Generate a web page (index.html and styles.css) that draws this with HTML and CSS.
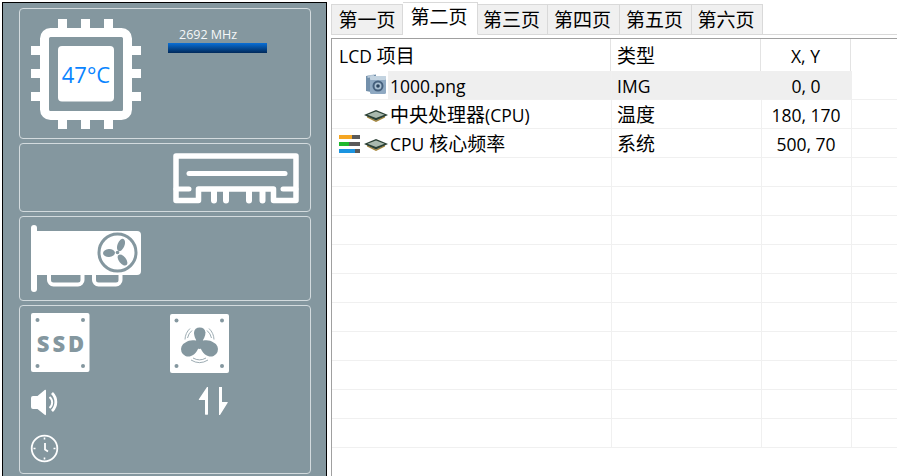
FILE: index.html
```html
<!DOCTYPE html>
<html lang="zh-CN">
<head>
<meta charset="utf-8">
<title>LCD</title>
<link rel="stylesheet" href="styles.css">
</head>
<body>
<div class="app">
  <aside class="panel">
    <section class="card card-cpu">
      <div class="cpu">
        <svg class="cpu-svg" width="110" height="110" viewBox="31 19 110 110">
          <rect x="44.500" y="32.500" width="83" height="83" rx="6" fill="none" stroke="#fff" stroke-width="9"/>
          <rect x="58" y="46" width="56" height="55.500" rx="4" fill="#fff"/>
          <path d="M58 19h9v10h-9zM81 19h9v10h-9zM104 19h9v10h-9zM58 119h9v10h-9zM81 119h9v10h-9zM104 119h9v10h-9zM31 46h10v9H31zM31 69h10v9H31zM31 92h10v9H31zM131 46h10v9h-10zM131 69h10v9h-10zM131 92h10v9h-10z" fill="#fff"/>
        </svg>
        <span class="temp">47°C</span>
      </div>
      <div class="freq">
        <div class="freq-label">2692 MHz</div>
        <div class="freq-bar"></div>
      </div>
    </section>
    <section class="card card-ram">
      <svg width="126" height="51" viewBox="173 153 126 51" fill="none" stroke="#fff">
        <path d="M176 200.500H198.500V189H273.500V200.500H296V156H176Z" stroke-width="5.500" stroke-linejoin="round"/>
        <path d="M189 173.500H285" stroke-width="5" stroke-linecap="round"/>
        <path d="M176 189H189M283 189H296" stroke-width="5" stroke-linecap="round"/>
        <path d="M214 190V200.500M226 190V200.500M249 190V200.500M262.500 190V200.500" stroke-width="6" stroke-linecap="round"/>
      </svg>
    </section>
    <section class="card card-gpu">
      <svg width="110" height="68" viewBox="31 225 110 68">
        <rect x="31" y="225" width="6" height="67" rx="3" fill="#fff"/>
        <path d="M36 231H137a4 4 0 0 1 4 4V271a4 4 0 0 1-4 4H36Z" fill="#fff"/>
        <path d="M49 274V280a4.500 4.500 0 0 0 4.500 4.500H78a4.500 4.500 0 0 0 4.500-4.500V274M94 274V280a4.500 4.500 0 0 0 4.500 4.500H116a4.500 4.500 0 0 0 4.500-4.500V274" fill="none" stroke="#fff" stroke-width="4"/>
        <circle cx="117.500" cy="252.500" r="18.500" fill="#fff" stroke="#84979f" stroke-width="3"/>
        <g fill="#84979f">
          <circle cx="117.500" cy="252.500" r="1.800"/>
          <ellipse cx="121" cy="245" rx="3.500" ry="6.500" transform="rotate(22 121 245)"/>
          <ellipse cx="109" cy="253" rx="6" ry="4" transform="rotate(-3 109 253)"/>
          <ellipse cx="122.500" cy="260" rx="3.500" ry="6.500" transform="rotate(-38 122.500 260)"/>
        </g>
      </svg>
    </section>
    <section class="card card-misc">
      <div class="ssd">
        <svg class="ssd-svg" width="59" height="60" viewBox="31 313 59 60">
          <rect x="31" y="313" width="58.500" height="59" rx="2" fill="#fff"/>
          <g fill="#84979f"><circle cx="37.500" cy="320" r="2"/><circle cx="83" cy="320" r="2"/><circle cx="37.500" cy="366" r="2"/><circle cx="83" cy="366" r="2"/></g>
        </svg>
        <span class="ssd-text">SSD</span>
      </div>
      <svg class="fan" width="60" height="61" viewBox="170 313 60 61">
        <rect x="170" y="314" width="59" height="59" rx="2" fill="#fff"/>
        <g fill="#84979f">
          <circle cx="176.500" cy="320.500" r="2"/><circle cx="222" cy="320.500" r="2"/><circle cx="176.500" cy="366" r="2"/><circle cx="222" cy="366" r="2"/>
          <circle cx="199.500" cy="344" r="5"/>
          <path d="M199.500 345C195.500 340 194 336 194 332.500A5.800 5.800 0 0 1 205.500 332.500C205.500 336 203.500 340 199.500 345Z"/>
          <path d="M199.500 342C204 339.500 209.500 339.500 213.500 342.500A6.500 6.500 0 0 1 208 356C203.500 354.500 199.500 349 199.500 342Z"/>
          <path d="M199.500 342C195 339.500 189.500 339.500 185.500 342.500A6.500 6.500 0 0 0 191 356C195.500 354.500 199.500 349 199.500 342Z"/>
        </g>
        <path d="M187.500 338A13 13 0 0 1 192 330.500M185 339.500A16 16 0 0 1 190 328.500M211.500 338A13 13 0 0 0 207 330.500M214 339.500A16 16 0 0 0 209 328.500M193 358A13 13 0 0 0 206 358M191 360A16 16 0 0 0 208 360" fill="none" stroke="#84979f" stroke-width=".8"/>
      </svg>
      <svg class="speaker" width="30" height="29" viewBox="31 387 30 29">
        <path d="M33 396H37.500L45 389.800Q46 389.300 46 390.800V414Q46 415.500 45 415L37.500 409H33Q31 409 31 407V398Q31 396 33 396Z" fill="#fff"/>
        <path d="M49.500 397A7 7 0 0 1 49.500 408" fill="none" stroke="#fff" stroke-width="2"/>
        <path d="M52 393A12.500 12.500 0 0 1 52 411" fill="none" stroke="#fff" stroke-width="2.800"/>
      </svg>
      <svg class="arrows" width="60" height="29" viewBox="170 387 60 29">
        <path d="M208 387V414.500Q206.500 415 205 414.500V400H199Q198.500 399.500 199 399L207 387Z" fill="#fff"/>
        <path d="M219 387Q220.500 386.500 222 387V402H227.500Q228 402.500 227.500 403L220 415H219Z" fill="#fff"/>
      </svg>
      <svg class="clock" width="29" height="29" viewBox="30 434 29 29" fill="none" stroke="#fff">
        <circle cx="44.500" cy="448.500" r="12.800" stroke-width="1.800"/>
        <path d="M44.500 437.500V439.500M44.500 457.500V459.500M33.500 448.500H35.500M53.500 448.500H55.500" stroke-width="1.600"/>
        <path d="M45 443V449.500L48 451.500" stroke-width="1.800"/>
      </svg>
    </section>
  </aside>

  <main class="pane">
    <nav class="tabs">
      <div class="tab">第一页</div>
      <div class="tab tab-active">第二页</div>
      <div class="tab">第三页</div>
      <div class="tab">第四页</div>
      <div class="tab">第五页</div>
      <div class="tab">第六页</div>
    </nav>
    <div class="list">
      <div class="row row-head">
        <div class="cell cell-name"><span class="lat">LCD</span> 项目</div>
        <div class="cell cell-type">类型</div>
        <div class="cell cell-pos"><span class="lat">X, Y</span></div>
      </div>
      <div class="row row-sel">
        <div class="cell cell-name">
          <span class="slot-bars"></span>
          <svg class="ico" width="24" height="24" viewBox="0 0 24 24">
            <path d="M2 3L12 1.500V20L2 18Z" fill="#7390ab"/>
            <path d="M3.500 2.500L10 1.500V4L3.500 5Z" fill="#b4c6d6"/>
            <rect x="6" y="3" width="16" height="18" rx="1.500" fill="#8fa9c2"/>
            <rect x="6" y="3" width="16" height="4" rx="1" fill="#c3d3e0"/>
            <circle cx="14" cy="13" r="5.500" fill="#46617e"/>
            <circle cx="14" cy="13" r="3.500" fill="#a9bfd2"/>
            <circle cx="14" cy="13" r="1.800" fill="#2b4560"/>
          </svg>
          <span class="name"><span class="lat">1000.png</span></span>
        </div>
        <div class="cell cell-type"><span class="lat">IMG</span></div>
        <div class="cell cell-pos"><span class="lat">0, 0</span></div>
      </div>
      <div class="row">
        <div class="cell cell-name">
          <span class="slot-bars"></span>
          <svg class="ico" width="24" height="24" viewBox="0 0 24 24">
            <path d="M3 14L12 18.500L21 14V15.500L12 20L3 15.500Z" fill="#a8873a"/>
            <path d="M0 13L12 8L24 13L12 18.500Z" fill="#2b4035"/>
            <path d="M3.500 12.800L12 9.500L20.500 12.800L12 16Z" fill="#a9b9ae"/>
          </svg>
          <span class="name">中央处理器<span class="lat">(CPU)</span></span>
        </div>
        <div class="cell cell-type">温度</div>
        <div class="cell cell-pos"><span class="lat">180, 170</span></div>
      </div>
      <div class="row">
        <div class="cell cell-name">
          <span class="slot-bars bars">
            <span class="bar"><span class="bar-fill fill-orange"></span></span>
            <span class="bar"><span class="bar-fill fill-green"></span></span>
            <span class="bar"><span class="bar-fill fill-blue"></span></span>
          </span>
          <svg class="ico" width="24" height="24" viewBox="0 0 24 24">
            <path d="M3 14L12 18.500L21 14V15.500L12 20L3 15.500Z" fill="#a8873a"/>
            <path d="M0 13L12 8L24 13L12 18.500Z" fill="#2b4035"/>
            <path d="M3.500 12.800L12 9.500L20.500 12.800L12 16Z" fill="#a9b9ae"/>
          </svg>
          <span class="name"><span class="lat">CPU</span> 核心频率</span>
        </div>
        <div class="cell cell-type">系统</div>
        <div class="cell cell-pos"><span class="lat">500, 70</span></div>
      </div>
      <div class="row"><div class="cell"></div><div class="cell"></div><div class="cell"></div></div>
      <div class="row"><div class="cell"></div><div class="cell"></div><div class="cell"></div></div>
      <div class="row"><div class="cell"></div><div class="cell"></div><div class="cell"></div></div>
      <div class="row"><div class="cell"></div><div class="cell"></div><div class="cell"></div></div>
      <div class="row"><div class="cell"></div><div class="cell"></div><div class="cell"></div></div>
      <div class="row"><div class="cell"></div><div class="cell"></div><div class="cell"></div></div>
      <div class="row"><div class="cell"></div><div class="cell"></div><div class="cell"></div></div>
      <div class="row"><div class="cell"></div><div class="cell"></div><div class="cell"></div></div>
      <div class="row"><div class="cell"></div><div class="cell"></div><div class="cell"></div></div>
      <div class="row"><div class="cell"></div><div class="cell"></div><div class="cell"></div></div>
    </div>
  </main>
</div>
</body>
</html>
```
FILE: styles.css
```css
* { box-sizing: border-box; }
html, body { margin: 0; height: 100%; overflow: hidden; background: #fff; }
body { font-family: "Open Sans", "Noto Sans CJK SC", sans-serif; font-size: 19px; color: #000; }
svg { display: block; }

.app { display: flex; width: 897px; height: 476px; overflow: hidden; }

/* left panel */
.panel {
  flex: none; width: 325px; height: 474px; margin: 2px 0 0 2px;
  padding: 5px 15px 0 16px;
  background: #84979f;
  border: 1px solid #000; border-bottom: 0;
  display: flex; flex-direction: column; gap: 4px;
}
.card { border: 1px solid #d3dbde; border-radius: 4px; flex: none; }
.card-cpu { height: 131px; padding: 10px 0 0 11px; display: flex; gap: 27px; }
.card-ram { height: 69px; padding: 9px 11px 0 0; display: flex; justify-content: flex-end; }
.card-gpu { height: 85px; padding: 8px 0 0 11px; }
.card-misc {
  height: 169px; padding: 7px 0 0 11px;
  display: grid; grid-template-columns: 139px 60px; grid-template-rows: 60px 29px 29px; row-gap: 14px;
  align-content: start;
}
.clock { margin-top: 4px; grid-column: 1; margin-left: -1px; }

.cpu { display: grid; width: 110px; height: 110px; }
.cpu-svg, .temp { grid-area: 1 / 1; }
.temp { place-self: center; color: #0a84ff; font-size: 22px; line-height: 1; }
.freq { width: 99px; padding-top: 8px; }
.freq-label { color: #f6f8f9; font-size: 12.500px; line-height: 16px; padding-left: 11px; white-space: nowrap; }
.freq-bar { height: 10px; background: linear-gradient(#0a6fd6, #00295a); }

.ssd { display: grid; width: 59px; height: 60px; }
.ssd-svg, .ssd-text { grid-area: 1 / 1; }
.ssd-text { place-self: center; color: #84979f; font-family: "Open Sans", sans-serif; font-weight: 800; font-size: 22px; letter-spacing: 3px; margin-right: -3px; line-height: 1; }

/* right pane */
.pane { flex: none; width: 566px; margin-left: 4px; display: flex; flex-direction: column; }
.tabs { height: 35px; flex: none; display: flex; align-items: flex-end; border-bottom: 1px solid #d9d9d9; }
.tab {
  width: 72px; height: 31px; margin-bottom: -1px;
  background: #f0f0f0; border: 1px solid #d9d9d9; border-left-width: 0;
  display: flex; align-items: center; justify-content: center; line-height: 1; padding-top: 1px;
}
.tab:first-child { border-left-width: 1px; }
.tab + .tab { padding-right: 2px; }
.tab-active { width: 75px; height: 33px; background: #fff; border-bottom-color: #fff; padding: 0 3px 3px 0; }
.tab-active + .tab { width: 70px; }
.tab:last-child { width: 71px; }

.list { flex: 1; min-height: 0; margin-top: 3px; border-top: 1px solid #a0a0a0; border-left: 1px solid #a0a0a0; overflow: hidden; }
.row { display: grid; grid-template-columns: 280px 150px 90px; height: 29px; border-bottom: 1px solid #f0f0f0; }
.cell { border-right: 1px solid #f0f0f0; display: flex; align-items: center; white-space: pre; line-height: 1; }
.row-head { height: 32px; border-bottom: 0; grid-template-columns: 279px 150px 90px; }
.row-head .cell { border-right: 1px solid #e3e3e3; padding-top: 3px; }
.row-sel .cell-type, .row-sel .cell-pos { background: #efefef; border-right-color: #efefef; }
.cell-name { padding-left: 7px; }
.cell-type { padding-left: 5px; }
.row-head .cell-type { padding-left: 6px; }
.cell-pos { justify-content: center; }
.row:not(.row-head) .cell-type { padding-top: 3px; }
.row:not(.row-head) .cell-pos { padding: 3px 1px 0 0; }
.name { flex: 1; height: 100%; display: flex; align-items: center; padding: 3px 0 0 2px; white-space: pre; }
.row-sel .name { background: #efefef; }
.lat { font-size: 17.500px; }
.ico { flex: none; margin-left: 4px; }
.slot-bars { flex: none; width: 21px; }
.bars { display: flex; flex-direction: column; gap: 2.500px; margin-top: 2px; }
.bar { display: block; height: 4.500px; background: #5a5a5a; }
.bar-fill { display: block; height: 100%; }
.fill-orange { width: 62%; background: #f5a623; }
.fill-green { width: 48%; background: #1fb82e; }
.fill-blue { width: 78%; background: #1b94e0; }
```
